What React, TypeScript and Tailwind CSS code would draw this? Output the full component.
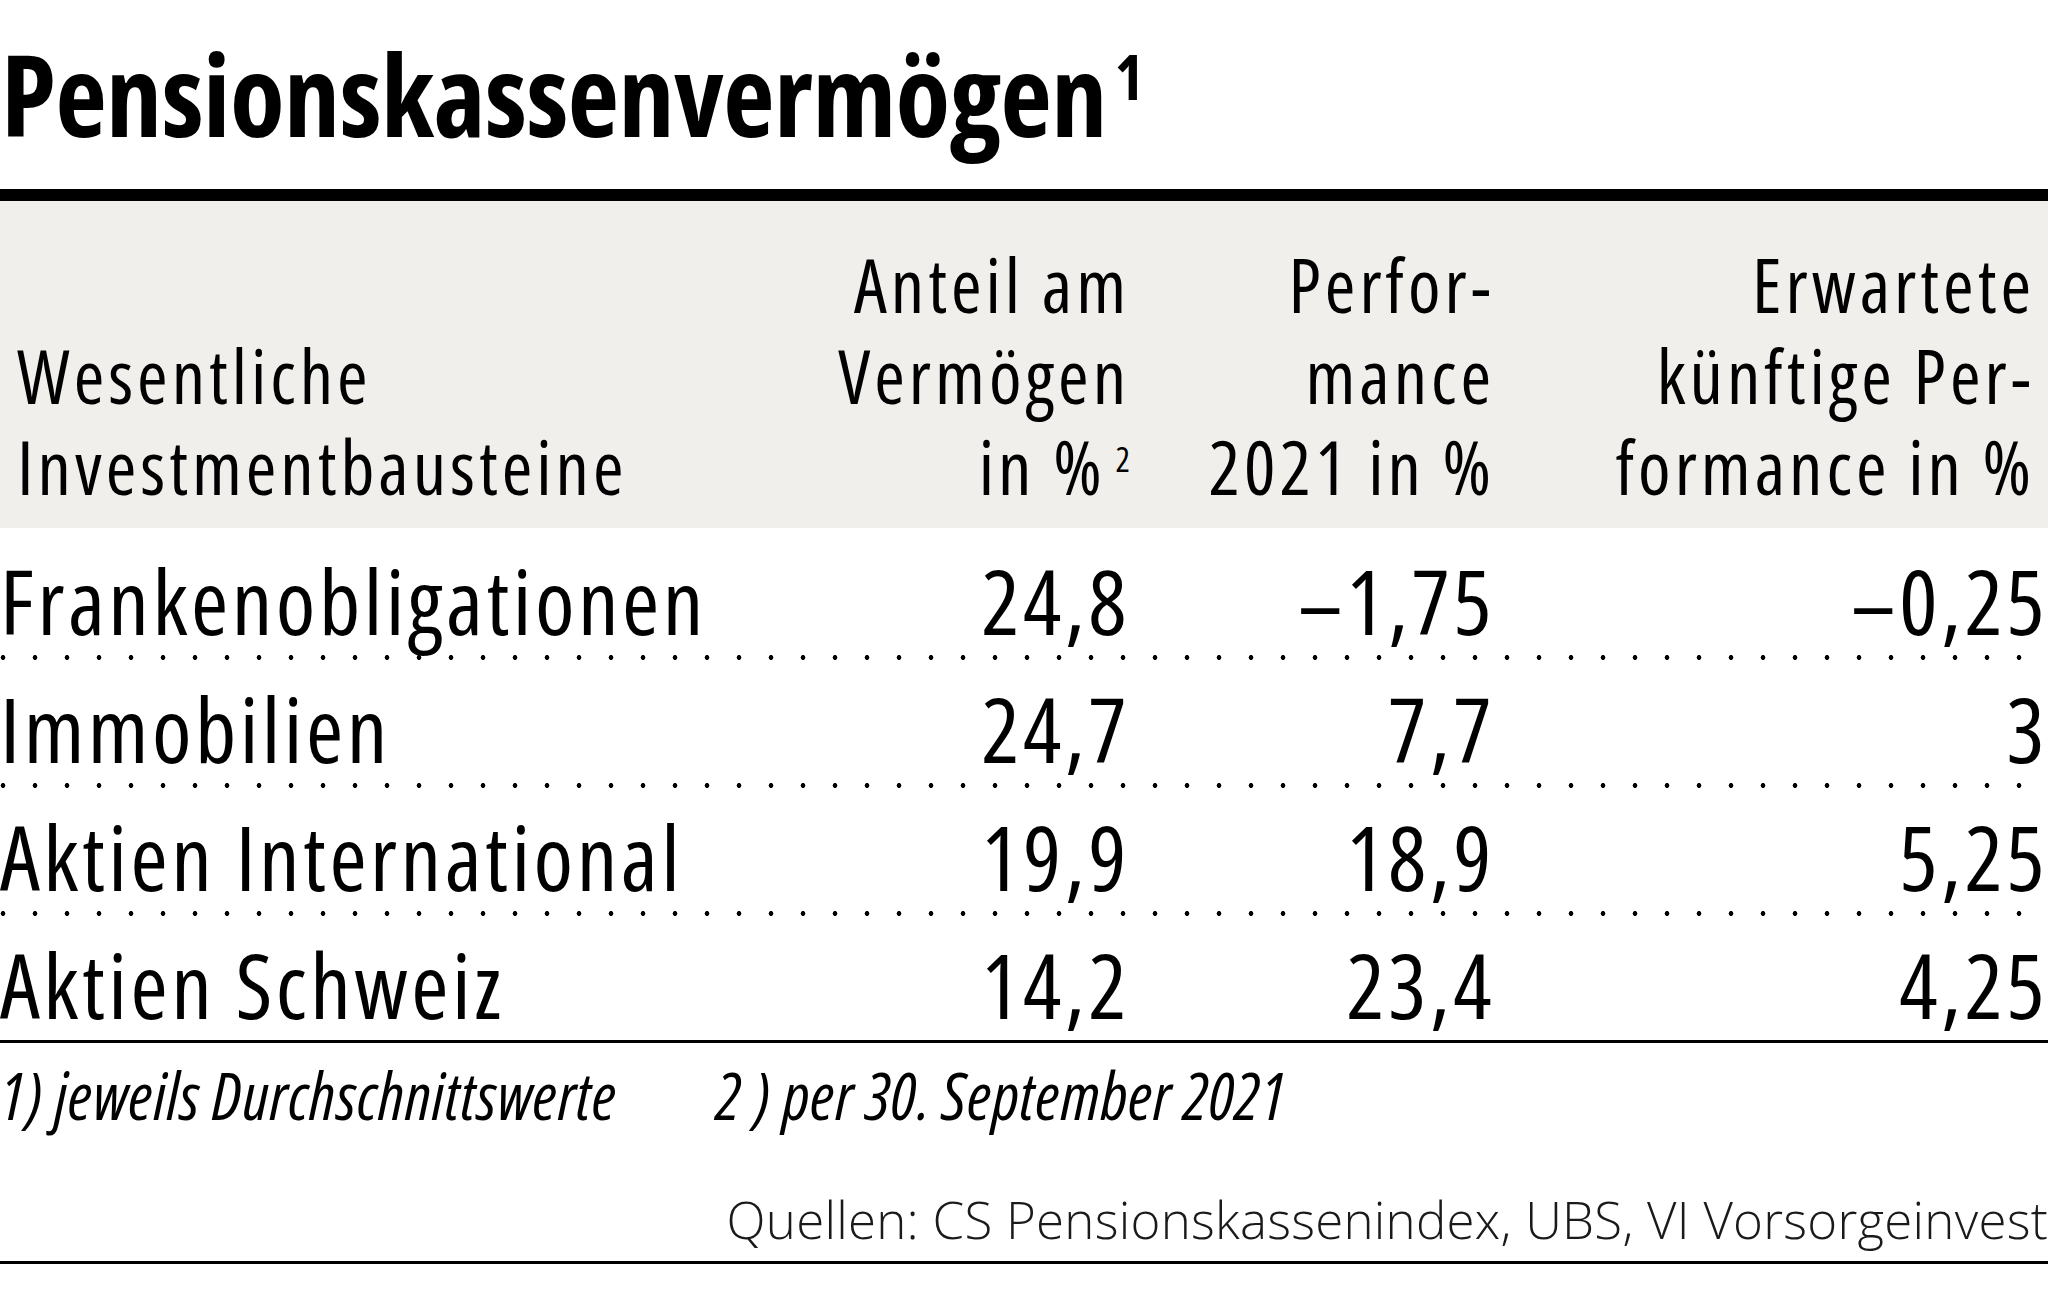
const COLS = "grid grid-cols-[700px_430px_365px_553px]";
const DOTS =
  "h-[5px] bg-[radial-gradient(circle,#000_2.1px,transparent_2.7px)] bg-size-[32px_5px] bg-position-[-13px_0px]";

const rows = [
  { name: "Frankenobligationen", a: "24,8", b: "–1,75", c: "–0,25", pt: "pt-[22px] pb-[5px]", last: false },
  { name: "Immobilien", a: "24,7", b: "7,7", c: "3", pt: "pt-[18px] pb-[5px]", last: false },
  { name: "Aktien International", a: "19,9", b: "18,9", c: "5,25", pt: "pt-[18px] pb-[5px]", last: false },
  { name: "Aktien Schweiz", a: "14,2", b: "23,4", c: "4,25", pt: "pt-[18px] pb-[6px]", last: true },
];

export default function App() {
  return (
    <div className="w-[2048px] bg-white text-black font-['Open_Sans',sans-serif] font-stretch-condensed">
      {/* Title */}
      <h1 className="pt-[34px] pl-[1px] text-[112px] leading-[120px] font-bold tracking-[-0.5px]">
        Pensionskassenvermögen
        <span className="ml-[8px] text-[62px] leading-none align-[37px]">1</span>
      </h1>
      <div className="mt-[35px] h-[12px] bg-black" />

      {/* Header */}
      <div className={`${COLS} bg-[#f0efeb] pt-[38px] pb-[16px] text-[74px] leading-[91px] tracking-[4px]`}>
        <div className="flex flex-col justify-end pl-[17px]">
          <div>Wesentliche</div>
          <div>Investmentbausteine</div>
        </div>
        <div className="text-right">
          <div>Anteil am</div>
          <div>Vermögen</div>
          <div>
            in %<span className="ml-[10px] text-[34px] leading-none align-[23px] tracking-normal">2</span>
          </div>
        </div>
        <div className="text-right">
          <div>Perfor-</div>
          <div>mance</div>
          <div>2021 in %</div>
        </div>
        <div className="pr-[13px] text-right">
          <div>Erwartete</div>
          <div>künftige Per-</div>
          <div>formance in %</div>
        </div>
      </div>

      {/* Body rows */}
      {rows.map((r) => (
        <div key={r.name}>
          <div className={`${COLS} text-[90px] leading-[100px] tracking-[3.5px] ${r.pt}`}>
            <div className="whitespace-nowrap">{r.name}</div>
            <div className="text-right">{r.a}</div>
            <div className="text-right">{r.b}</div>
            <div className="text-right">{r.c}</div>
          </div>
          {r.last ? <div className="h-[3px] bg-black" /> : <div className={DOTS} />}
        </div>
      ))}

      {/* Footnotes */}
      <div className="mt-[15px] flex text-[65px] leading-[75px] italic tracking-[0.7px]">
        <span className="w-[716px] whitespace-nowrap">1) jeweils Durchschnittswerte</span>
        <span className="whitespace-nowrap">2 ) per 30. September 2021</span>
      </div>

      {/* Sources */}
      <div className="mt-[56px] text-right text-[51px] leading-[60px] font-light font-stretch-normal tracking-[0.25px] whitespace-nowrap text-[#1a1a1a]">
        Quellen: CS Pensionskassenindex, UBS, VI Vorsorgeinvest
      </div>
      <div className="mt-[12px] h-[3px] bg-black" />
    </div>
  );
}
